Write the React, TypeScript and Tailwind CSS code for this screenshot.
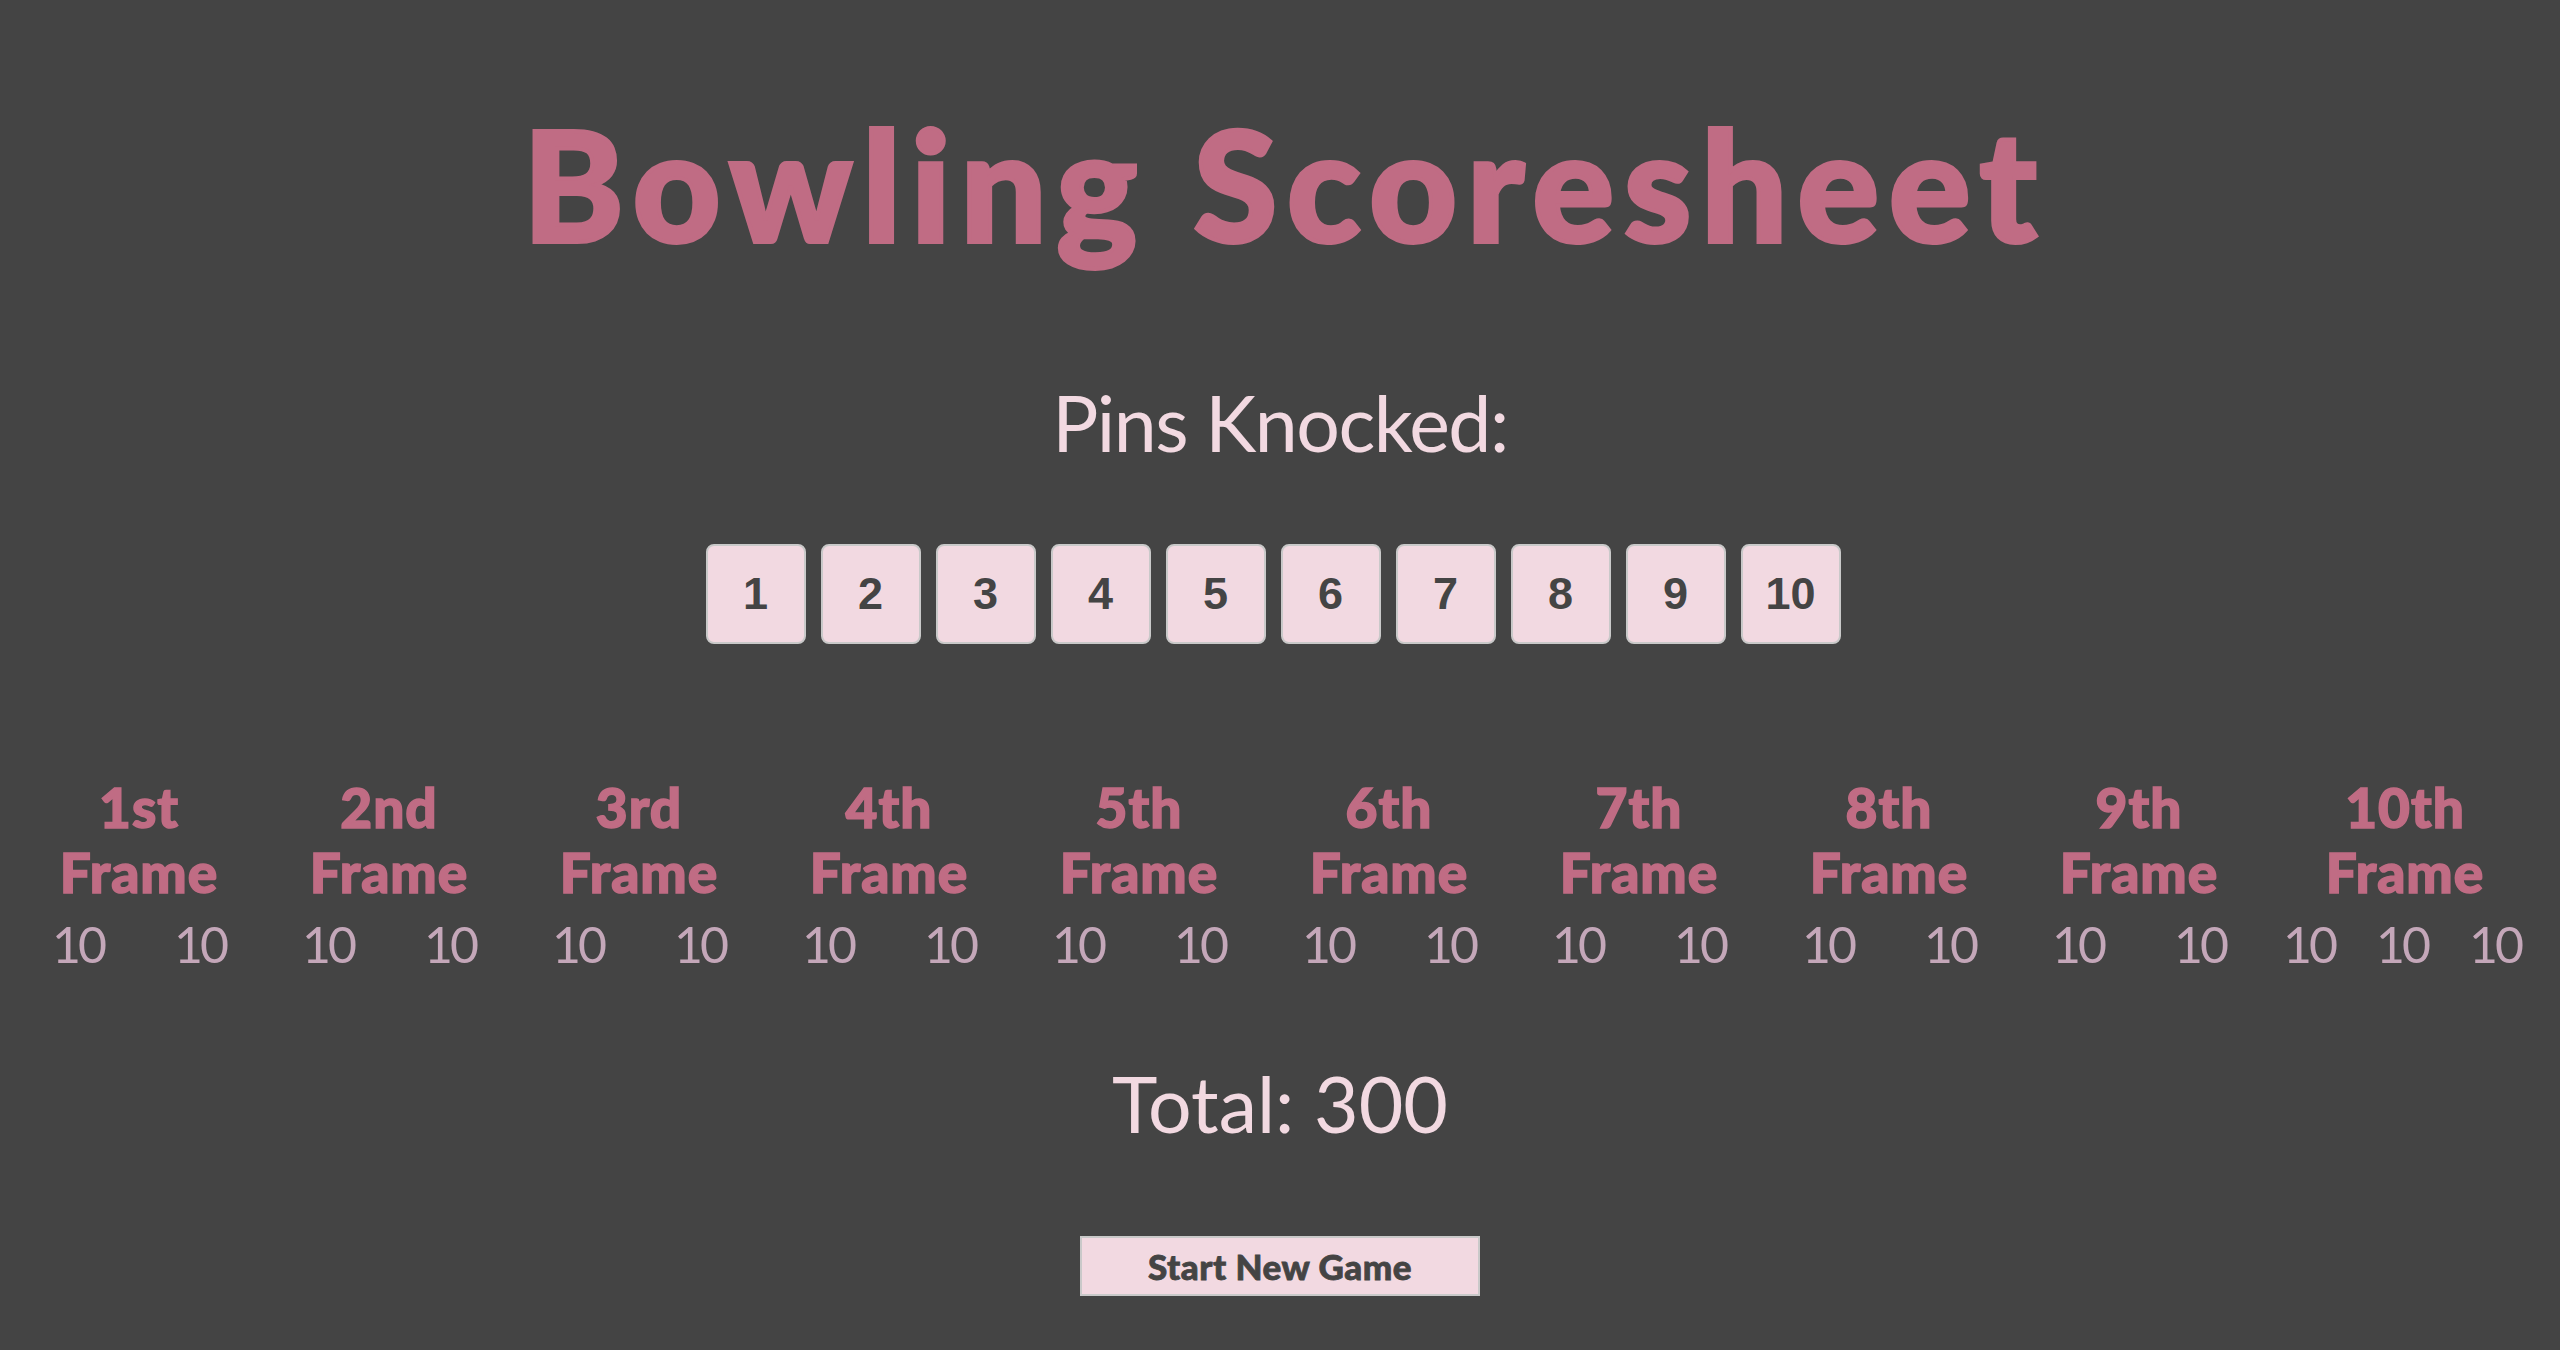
import React from "react"

const frames = [
  { label: "1st", scores: [10, 10] },
  { label: "2nd", scores: [10, 10] },
  { label: "3rd", scores: [10, 10] },
  { label: "4th", scores: [10, 10] },
  { label: "5th", scores: [10, 10] },
  { label: "6th", scores: [10, 10] },
  { label: "7th", scores: [10, 10] },
  { label: "8th", scores: [10, 10] },
  { label: "9th", scores: [10, 10] },
  { label: "10th", scores: [10, 10, 10] },
]

const pins = [1, 2, 3, 4, 5, 6, 7, 8, 9, 10]

const App = () => {
  return (
    <main className="min-h-screen w-full bg-[#444444] flex flex-col items-center pt-[107px] font-['Lato','Noto_Sans',sans-serif]">
      <h1 className="text-[152px] leading-none font-black text-[#c06c84] tracking-[10px] pl-[10px] [-webkit-text-stroke:4px_#c06c84]">Bowling Scoresheet</h1>

      <h2 className="mt-[125px] text-[77px] leading-none font-normal text-[#f2d9e1] tracking-[-1.5px]">Pins Knocked:</h2>

      <div className="mt-[83px] mr-[14px] flex gap-[15px]">
        {pins.map((pin) => (
          <button
            key={pin}
            className="w-[100px] h-[100px] rounded-[8px] border-2 border-[#c9c9c9] bg-[#f2d9e1] text-[#444444] text-[45px] font-bold font-['Liberation_Sans',Arial,sans-serif] flex items-center justify-center"
          >
            {pin}
          </button>
        ))}
      </div>

      <section className="mt-[131px] w-full px-[14px] flex">
        {frames.map((frame, index) => (
          <article key={frame.label} className={index === 9 ? "w-[282px] flex flex-col items-center" : "w-[250px] flex flex-col items-center"}>
            <h3 className="text-[55px] leading-[65px] font-black text-[#c06c84] text-center tracking-[1px] [-webkit-text-stroke:1.5px_#c06c84]">
              {frame.label}
              <br />
              Frame
            </h3>
            <div className={index === 9 ? "mt-[14px] -ml-[6px] flex gap-[41px]" : "mt-[14px] flex gap-[70px]"}>
              {frame.scores.map((score, i) => (
                <span key={i} className="text-[50px] leading-none text-[#c4a7b9] tracking-[-3px]">{score}</span>
              ))}
            </div>
          </article>
        ))}
      </section>

      <p className="mt-[96px] text-[77px] leading-none text-[#f2d9e1]">Total: 300</p>

      <button className="mt-[94px] w-[400px] h-[60px] border-2 border-[#c9c9c9] bg-[#f2d9e1] text-[#444444] text-[35px] font-black leading-none tracking-[0.5px] [-webkit-text-stroke:0.8px_#444444]">
        Start New Game
      </button>
    </main>
  )
}

export default App
